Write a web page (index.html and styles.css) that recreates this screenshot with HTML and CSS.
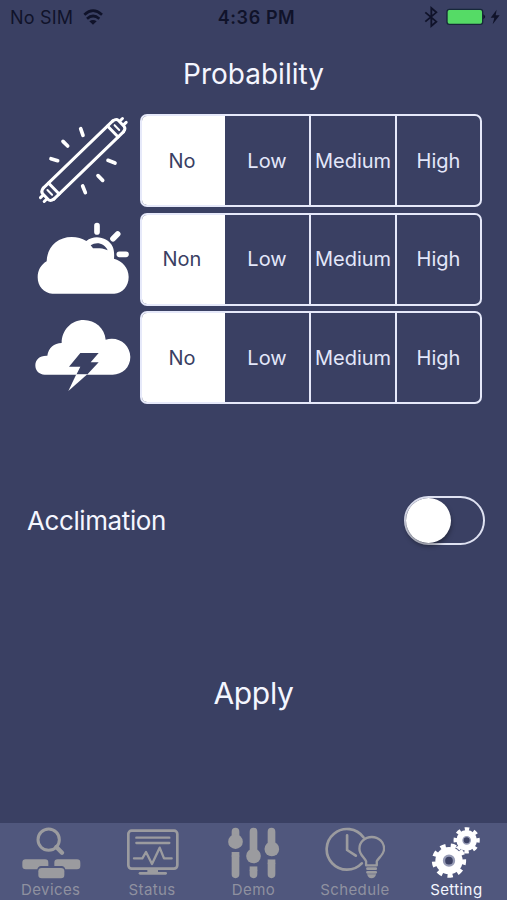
FILE: index.html
```html
<!DOCTYPE html>
<html lang="en">

<head>
    <meta charset="UTF-8">
    <meta name="viewport" content="width=device-width, initial-scale=1.0">
    <link rel="stylesheet" href="styles.css">
    <title>Setting</title>
</head>

<body>
    <header class="status-bar">
        <div class="carrier">
            <span>No SIM</span>
            <svg class="wifi" viewBox="249 24 60 48" fill="none" stroke="#10132a" stroke-width="8">
                <path d="M253 41Q279 17 306 41M261 53Q279 37 298 53" />
                <path d="M268 61Q279 53 290 61L279 71Z" fill="#10132a" stroke="none" />
            </svg>
        </div>
        <div class="time">4:36 PM</div>
        <div class="indicators">
            <svg class="bluetooth" viewBox="510 18 42 66" fill="none" stroke="#10132a" stroke-width="5.5">
                <path d="M514 37L547 65L532 78V24L547 37L514 65" />
            </svg>
            <svg class="battery" viewBox="576 24 120 54">
                <rect x="579" y="28" width="107" height="45" rx="7" fill="#55db66" stroke="#17283a" stroke-width="4" />
                <path d="M688 43Q699 50 688 58Z" fill="#10132a" />
            </svg>
            <svg class="charging" viewBox="708 24 30 54">
                <path d="M728 29L710 53H721L716 73L737 46H725Z" fill="#10132a" />
            </svg>
        </div>
    </header>

    <main>
        <h1>Probability</h1>

        <div class="option-row">
            <!-- Fluorescent tube -->
            <svg class="weather-icon" viewBox="0 18 345 279" fill="none" stroke="#fff" stroke-linecap="round" stroke-linejoin="round">
                <g transform="translate(175 156) rotate(-44)" stroke-width="9">
                    <path d="M-145 -23H145M-145 23H145" />
                    <path d="M-145 -23Q-158 -21 -158 -12V12Q-158 21 -145 23M145 -23Q158 -21 158 -12V12Q158 21 145 23" />
                    <path d="M-123 -23V23M123 -23V23" />
                    <path d="M-140 -10V10M140 -10V10" stroke-width="6" />
                    <path d="M-160 -8H-171M-160 8H-171M160 -8H171M160 8H171" stroke-width="9" />
                </g>
                <path d="M167 62L174 82M114 100L128 114M78 152L98 158M249 157L270 165M219 203L233 217M173 234L181 254" stroke-width="11" />
            </svg>
            <div class="segments">
                <button type="button" class="selected">No</button>
                <button type="button">Low</button>
                <button type="button">Medium</button>
                <button type="button">High</button>
            </div>
        </div>

        <div class="option-row">
            <!-- Cloud with sun -->
            <svg class="weather-icon" viewBox="0 9 345 279">
                <path d="M82 251C56 250 38 228 38 202C38 181 48 164 65 154C66 112 97 81 140 81C157 81 171 85 184 93C210 72 250 83 263 110C268 122 268 136 267 146C291 153 311 173 311 201C311 229 292 250 268 251Z" fill="#fff" />
                <path d="M197 106C213 95 238 98 248 121C231 113 215 115 204 115Z" fill="#3a4063" />
                <path d="M216 47V66M264 86L278 72M283 133H303" stroke="#fff" stroke-width="17" stroke-linecap="round" />
            </svg>
            <div class="segments">
                <button type="button" class="selected">Non</button>
                <button type="button">Low</button>
                <button type="button">Medium</button>
                <button type="button">High</button>
            </div>
        </div>

        <div class="option-row">
            <!-- Thunder cloud -->
            <svg class="weather-icon" viewBox="0 12 345 279">
                <path d="M59 203C42 203 31 191 31 175C31 158 44 145 67 146C70 123 87 108 110 108C110 69 139 39 176 39C211 39 239 64 242 98C281 86 316 114 316 150C316 181 292 203 263 203Z" fill="#fff" />
                <path d="M166 138H221L197 166H221L186 203H154L166 179H132Z" fill="#3a4063" />
                <path d="M154 202H187L130 252Z" fill="#fff" />
            </svg>
            <div class="segments">
                <button type="button" class="selected">No</button>
                <button type="button">Low</button>
                <button type="button">Medium</button>
                <button type="button">High</button>
            </div>
        </div>

        <div class="acclimation">
            <span>Acclimation</span>
            <button type="button" class="switch" aria-label="Acclimation"><span class="knob"></span></button>
        </div>

        <button type="button" class="apply">Apply</button>
    </main>

    <nav class="tab-bar">
        <a class="tab">
            <svg viewBox="62 33 180 162" fill="#9b9b9f">
                <circle cx="145" cy="74" r="32" fill="none" stroke="#9b9b9f" stroke-width="9" />
                <path d="M168 96L185 113" stroke="#9b9b9f" stroke-width="13" stroke-linecap="round" />
                <path d="M76 133H134Q144 133 144 143V153H122Q113 154 111 163H76Q66 163 66 153V143Q66 133 76 133Z" />
                <path d="M172 133H230Q240 133 240 143V153Q240 163 230 163H195Q193 154 184 153H162V143Q162 133 172 133Z" />
                <rect x="114" y="159" width="78" height="31" rx="10" />
            </svg>
            <span>Devices</span>
        </a>
        <a class="tab">
            <svg viewBox="366 33 180 162" fill="none" stroke="#9b9b9f" stroke-width="8" stroke-linecap="round" stroke-linejoin="round">
                <rect x="385" y="47" width="147" height="114" rx="10" />
                <path d="M409 68H508M409 84H508M402 130H427L438 111L456 147L479 98L492 130H515" stroke-width="7" />
                <path d="M442 163H474V172H442Z" fill="#9b9b9f" stroke="none" />
                <path d="M420 175H497" />
            </svg>
            <span>Status</span>
        </a>
        <a class="tab">
            <svg viewBox="70.5 33 180 162" fill="#9b9b9f" stroke="#9b9b9f" stroke-width="23" stroke-linecap="round">
                <path d="M105 50V80M159 50V122M213 50V100M105 125V178M159 168V178M213 147V178" />
                <path d="M93.5 111H116.5V125H93.5ZM147.5 154H170.5V168H147.5ZM201.5 133H224.5V147H201.5Z" stroke="none" />
                <path d="M92 105H118V111H92ZM146 148H172V154H146ZM200 127H226V133H200Z" fill="#50577d" stroke="none" />
                <g stroke="none">
                    <circle cx="105" cy="80" r="22" />
                    <circle cx="159" cy="123" r="22" />
                    <circle cx="214" cy="102" r="22" />
                </g>
            </svg>
            <span>Demo</span>
        </a>
        <a class="tab">
            <svg viewBox="374.7 33 180 162" fill="none" stroke="#9b9b9f" stroke-width="8" stroke-linecap="round" stroke-linejoin="round">
                <path d="M490 67A61 61 0 1 0 485 145M441 61V105L467 122" />
                <path d="M498 151V139C491 125 478 119 478 101C478 81 494 66 515 66C536 66 552 82 552 101C552 119 536 127 530 139V151Z" stroke-width="7" />
                <path d="M502 161H527M502 172H527" />
                <path d="M501 178H528Q525 190 514 190Q504 190 501 178Z" fill="#9b9b9f" stroke="none" />
            </svg>
            <span>Schedule</span>
        </a>
        <a class="tab active">
            <svg viewBox="109 33 180 162" fill="none">
                <circle cx="231" cy="76" r="34" stroke="#fff" stroke-width="11" stroke-dasharray="13 13.7" transform="rotate(-11 231 76)" />
                <circle cx="231" cy="76" r="31" fill="#fff" />
                <circle cx="231" cy="76" r="11" fill="#3d4264" stroke="#969bb5" stroke-width="4" />
                <circle cx="178" cy="137" r="44" fill="#50577d" />
                <circle cx="178" cy="137" r="45" stroke="#fff" stroke-width="13" stroke-dasharray="16 15.416" transform="rotate(-5 178 137)" />
                <circle cx="178" cy="137" r="41" fill="#fff" />
                <circle cx="178" cy="137" r="15" fill="#3d4264" stroke="#969bb5" stroke-width="7" />
            </svg>
            <span>Setting</span>
        </a>
    </nav>
</body>

</html>
```

FILE: styles.css
```css
* {
    box-sizing: border-box;
}

body {
    font-family: Inter, 'Liberation Sans', sans-serif;
    margin: 0;
    height: 900px;
    display: flex;
    flex-direction: column;
    background-color: #3a4063;
    color: #f4f6ff;
}

button {
    font: inherit;
    color: inherit;
    padding: 0;
    border: none;
    background: none;
    cursor: pointer;
}

svg {
    display: block;
    flex: none;
}

.status-bar {
    display: grid;
    grid-template-columns: 1fr auto 1fr;
    align-items: center;
    height: 34px;
    padding: 0 7px 0 10px;
    font-size: 18px;
    color: #10132a;
}

.carrier,
.indicators {
    display: flex;
    align-items: center;
}

.carrier {
    gap: 10px;
    letter-spacing: 0.2px;
}

.time {
    font-weight: 600;
    letter-spacing: 0.6px;
    padding-left: 3px;
}

.indicators {
    justify-content: flex-end;
}

.wifi {
    width: 20px;
    height: 16px;
}

.bluetooth {
    width: 14px;
    height: 22px;
    margin-right: 8px;
}

.battery {
    width: 40px;
    height: 18px;
    margin-right: 4px;
}

.charging {
    width: 10px;
    height: 18px;
}

main {
    flex: 1;
    display: flex;
    flex-direction: column;
}

h1 {
    margin: 20px 0 20px;
    height: 40px;
    line-height: 40px;
    font-size: 28px;
    font-weight: 400;
    text-align: center;
}

.option-row {
    display: flex;
    height: 93px;
    padding: 0 25px;
    margin-bottom: 5.7px;
}

.weather-icon {
    width: 115px;
    height: 93px;
}

.segments {
    display: grid;
    grid-template-columns: 83px 84px 86px 85px;
    width: 342px;
    border: 2px solid #e6e9fa;
    border-radius: 7px;
    font-size: 20px;
    overflow: hidden;
    color: #e3e7fa;
}

.segments button + button + button {
    border-left: 2px solid #e6e9fa;
}

.segments .selected {
    padding-right: 3px;
    background-color: #fff;
    color: #3a4063;
}

.acclimation {
    display: flex;
    align-items: center;
    justify-content: space-between;
    height: 50px;
    margin: 85px 22px 0 27px;
    font-size: 26px;
    letter-spacing: -0.4px;
}

.switch {
    width: 81px;
    height: 49px;
    border: 2px solid #dfe2f2;
    border-radius: 25px;
}

.knob {
    display: block;
    width: 45px;
    height: 45px;
    border-radius: 50%;
    background-color: #fff;
    box-shadow: 0 3px 5px rgba(0, 0, 0, 0.4);
}

.apply {
    align-self: center;
    height: 50px;
    margin-top: 123px;
    font-size: 30px;
    letter-spacing: -0.3px;
}

.tab-bar {
    display: flex;
    height: 77px;
    padding-top: 3px;
    background-color: #50577d;
}

.tab {
    flex: 1;
    display: flex;
    flex-direction: column;
    align-items: center;
    font-size: 15px;
    line-height: 19px;
    letter-spacing: 0.4px;
    color: #8f91a0;
}

.tab svg {
    width: 60px;
    height: 54px;
}

.tab.active {
    color: #f4f6ff;
}
```
